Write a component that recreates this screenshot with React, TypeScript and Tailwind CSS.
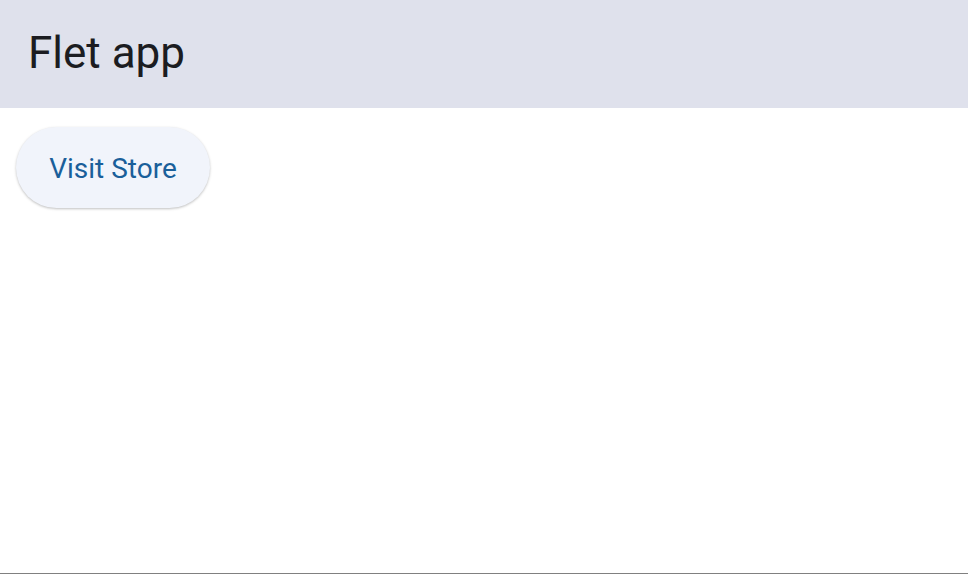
export default function App() {
  return (
    <div
      className="flex h-[574px] w-full flex-col bg-white"
      style={{ fontFamily: "Roboto, 'Noto Sans', sans-serif" }}
    >
      <header className="h-[108px] shrink-0 bg-[#dfe1ec] pl-[28px] pt-[31px]">
        <h1 className="text-[44px] font-normal leading-none text-[#1b1c21]">
          Flet app
        </h1>
      </header>
      <main className="flex-1 px-4 pt-[19px]">
        <button className="h-[81px] w-[194px] rounded-full bg-[#f1f4fb] pt-[2px] text-[28px] font-normal text-[#1a5f9a] shadow-[0_1px_3px_rgba(0,0,0,0.18),0_1px_2px_rgba(0,0,0,0.08)]">
          Visit Store
        </button>
      </main>
      <div className="h-px w-full bg-[#808080]" />
    </div>
  );
}
